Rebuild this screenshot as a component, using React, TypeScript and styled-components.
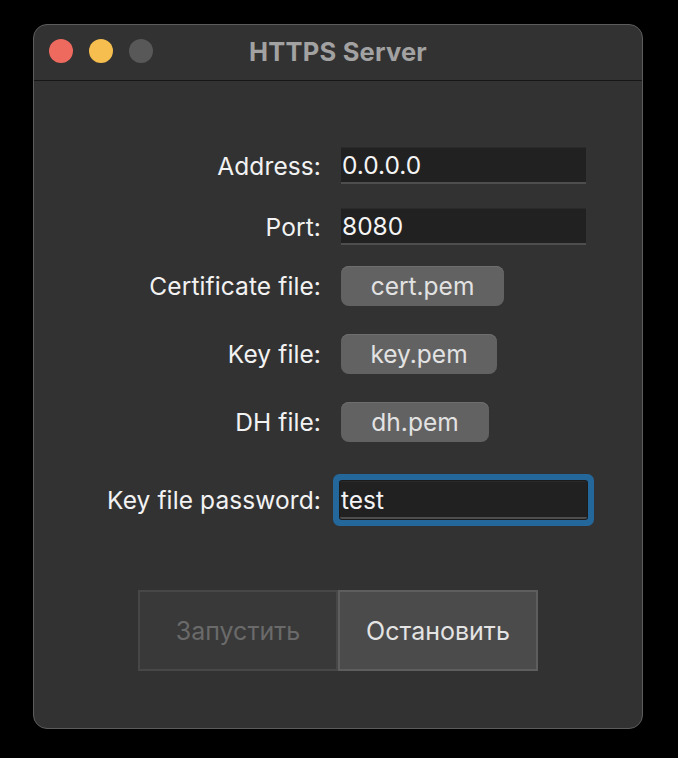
import React from "react";
import styled, { createGlobalStyle } from "styled-components";

const Global = createGlobalStyle`
  html, body { margin: 0; padding: 0; background: #000; }
  body { font-family: Inter, "Noto Sans", "DejaVu Sans", sans-serif; }
  * { box-sizing: border-box; }
`;

const Page = styled.div`
  width: 678px;
  height: 758px;
  padding: 24px 35px 0 33px;
  background: #000;
`;

const Window = styled.div`
  width: 610px;
  height: 705px;
  background: #323232;
  border: 1px solid #5c5c5c;
  border-radius: 14px;
  overflow: hidden;
  display: flex;
  flex-direction: column;
`;

const TitleBar = styled.div`
  position: relative;
  height: 56px;
  flex: none;
  display: flex;
  align-items: center;
  justify-content: center;
  border-bottom: 1px solid #161616;
`;

const Lights = styled.div`
  position: absolute;
  left: 15px;
  top: 14px;
  display: flex;
  gap: 16px;
`;

const Light = styled.span<{ $c: string }>`
  width: 24px;
  height: 24px;
  border-radius: 50%;
  background: ${(p) => p.$c};
`;

const Title = styled.div`
  font-size: 25.5px;
  font-weight: 700;
  color: #a2a2a2;
  letter-spacing: 0.2px;
  margin-top: -3px;
`;

const Content = styled.div`
  display: flex;
  flex-direction: column;
  padding-top: 66px;
`;

const Row = styled.div<{ $mt: number }>`
  display: grid;
  grid-template-columns: 287px 1fr;
  column-gap: 20px;
  align-items: center;
  margin-top: ${(p) => p.$mt}px;
`;

const Label = styled.div`
  text-align: right;
  font-size: 24.5px;
  letter-spacing: 0.1px;
  color: #f2f2f2;
`;

const Field = styled.div<{ $focus?: boolean }>`
  width: 245px;
  height: ${(p) => (p.$focus ? 38 : 37)}px;
  background: #212121;
  border-top: 1px solid #2a2a2a;
  border-bottom: 2px solid #4e4e4e;
  display: flex;
  align-items: center;
  padding-left: 1px;
  font-size: 24.5px;
  color: #f4f4f4;
  ${(p) =>
    p.$focus
      ? `
    margin-left: -1px;
    width: 247px;
    border-radius: 2px;
    box-shadow: 0 0 0 1px #1b1b1b, 0 0 0 7px #24679a;
  `
      : ""}
`;

const FileButton = styled.div<{ $w: number }>`
  width: ${(p) => p.$w}px;
  height: 40px;
  border-radius: 8px;
  background: #626262;
  box-shadow: inset 0 1px 0 #6e6e6e;
  display: flex;
  align-items: center;
  justify-content: center;
  font-size: 24.5px;
  color: #e2e2e2;
`;

const Actions = styled.div`
  display: flex;
  justify-content: center;
  margin-top: 71px;
`;

const ActionButton = styled.div<{ $disabled?: boolean }>`
  width: 200px;
  height: 81px;
  display: flex;
  align-items: center;
  justify-content: center;
  font-size: 25px;
  background: ${(p) => (p.$disabled ? "#393939" : "#4b4b4b")};
  border: 2px solid ${(p) => (p.$disabled ? "#474747" : "#5e5e5e")};
  color: ${(p) => (p.$disabled ? "#6a6a6a" : "#e4e4e4")};
`;

export default function App() {
  return (
    <Page>
      <Global />
      <Window>
        <TitleBar>
          <Lights>
            <Light $c="#ee6a5f" />
            <Light $c="#f5be4f" />
            <Light $c="#585858" />
          </Lights>
          <Title>HTTPS Server</Title>
        </TitleBar>
        <Content>
          <Row $mt={0}>
            <Label>Address:</Label>
            <Field>0.0.0.0</Field>
          </Row>
          <Row $mt={24}>
            <Label>Port:</Label>
            <Field>8080</Field>
          </Row>
          <Row $mt={21}>
            <Label>Certificate file:</Label>
            <FileButton $w={163}>cert.pem</FileButton>
          </Row>
          <Row $mt={28}>
            <Label>Key file:</Label>
            <FileButton $w={156}>key.pem</FileButton>
          </Row>
          <Row $mt={28}>
            <Label>DH file:</Label>
            <FileButton $w={148}>dh.pem</FileButton>
          </Row>
          <Row $mt={39}>
            <Label>Key file password:</Label>
            <Field $focus>test</Field>
          </Row>
          <Actions>
            <ActionButton $disabled>Запустить</ActionButton>
            <ActionButton>Остановить</ActionButton>
          </Actions>
        </Content>
      </Window>
    </Page>
  );
}
